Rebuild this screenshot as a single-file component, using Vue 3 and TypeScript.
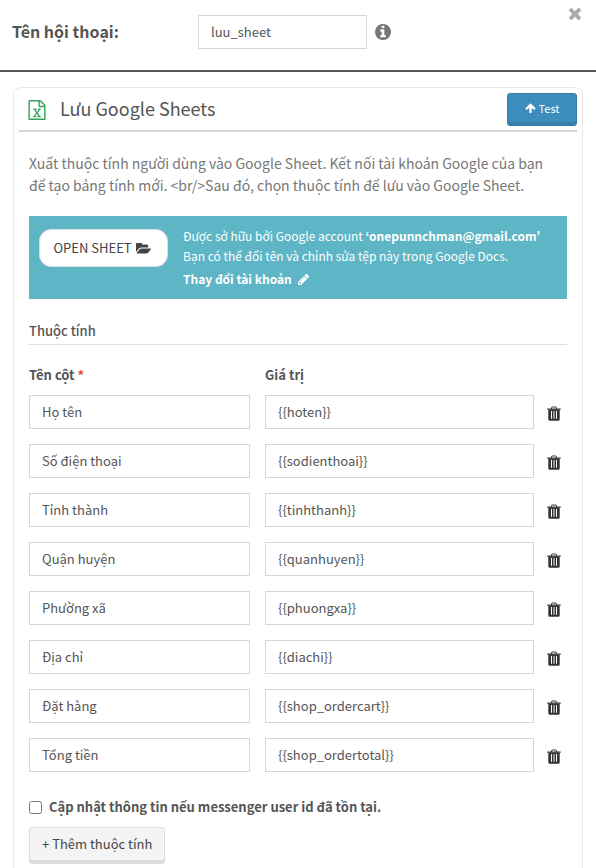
<script setup lang="ts">
import { ref } from 'vue'

interface AttributeRow {
  column: string
  value: string
}

const dialogName = ref('luu_sheet')
const updateExisting = ref(false)
const rows = ref<AttributeRow[]>([
  { column: 'Họ tên', value: '{{hoten}}' },
  { column: 'Số điện thoại', value: '{{sodienthoai}}' },
  { column: 'Tỉnh thành', value: '{{tinhthanh}}' },
  { column: 'Quận huyện', value: '{{quanhuyen}}' },
  { column: 'Phường xã', value: '{{phuongxa}}' },
  { column: 'Địa chỉ', value: '{{diachi}}' },
  { column: 'Đặt hàng', value: '{{shop_ordercart}}' },
  { column: 'Tổng tiền', value: '{{shop_ordertotal}}' },
])

const description =
  'Xuất thuộc tính người dùng vào Google Sheet. Kết nối tài khoản Google của bạn để tạo bảng tính mới. <br/>Sau đó, chọn thuộc tính để lưu vào Google Sheet.'

function addRow(): void {
  rows.value.push({ column: '', value: '' })
}

function removeRow(index: number): void {
  rows.value.splice(index, 1)
}
</script>

<template>
  <main class="page">
    <header class="top">
      <label class="top-label" for="dialog-name">Tên hội thoại:</label>
      <input id="dialog-name" v-model="dialogName" class="field top-field" type="text" />
      <svg class="info" viewBox="128 128 1536 1536" aria-hidden="true">
        <path d="M1152 1376v-160q0-14-9-23t-23-9h-96v-512q0-14-9-23t-23-9h-320q-14 0-23 9t-9 23v160q0 14 9 23t23 9h96v320h-96q-14 0-23 9t-9 23v160q0 14 9 23t23 9h448q14 0 23-9t9-23zm-128-896v-160q0-14-9-23t-23-9h-192q-14 0-23 9t-9 23v160q0 14 9 23t23 9h192q14 0 23-9t9-23zm640 416q0 209-103 385.5t-279.5 279.5-385.5 103-385.5-103-279.5-279.5-103-385.5 103-385.5 279.5-279.5 385.5-103 385.5 103 279.5 279.5 103 385.5z" />
      </svg>
      <button class="close" type="button" aria-label="Đóng">
        <svg viewBox="302 366 1188 1188" aria-hidden="true">
          <path d="M1490 1322q0 40-28 68l-136 136q-28 28-68 28t-68-28l-294-294-294 294q-28 28-68 28t-68-28l-136-136q-28-28-28-68t28-68l294-294-294-294q-28-28-28-68t28-68l136-136q28-28 68-28t68 28l294 294 294-294q28-28 68-28t68 28l136 136q28 28 28 68t-28 68l-294 294 294 294q28 28 28 68z" />
        </svg>
      </button>
    </header>

    <section class="card">
      <div class="card-head">
        <svg class="excel" viewBox="128 0 1536 1792" aria-hidden="true">
          <path d="M1596 380q28 28 48 76t20 88v1152q0 40-28 68t-68 28h-1344q-40 0-68-28t-28-68v-1600q0-40 28-68t68-28h896q40 0 88 20t76 48zm-444-244v376h376q-10-29-22-41l-313-313q-12-12-41-22zm384 1528v-1024h-416q-40 0-68-28t-28-68v-416h-768v1536h1280zm-979-234v106h281v-106h-75l103-161q5-7 10-16.5t7.5-13.5 3.5-4h2q1 4 5 10 2 4 4.5 7.5t6 8 6.5 8.5l107 161h-76v106h291v-106h-68l-192-273 195-282h67v-107h-279v107h74l-103 159q-4 7-10 16.5t-9 13.5l-2 3h-2q-1-4-5-10-6-11-17-23l-106-159h76v-107h-290v107h68l189 272-194 283h-68z" />
        </svg>
        <h1 class="title">Lưu Google Sheets</h1>
        <button class="test" type="button">
          <svg viewBox="110 128 1570 1536" aria-hidden="true">
            <path d="M1675 971q0 51-37 90l-75 75q-38 38-91 38-54 0-90-38l-294-293v704q0 52-37.5 84.5t-90.5 32.5h-128q-53 0-90.5-32.5t-37.5-84.5v-704l-294 293q-36 38-90 38t-90-38l-75-75q-38-38-38-90 0-53 38-91l651-651q35-37 90-37 54 0 91 37l651 651q37 39 37 91z" />
          </svg>
          Test
        </button>
      </div>

      <div class="card-body">
        <p class="description">{{ description }}</p>

        <div class="banner">
          <button class="open" type="button">
            OPEN SHEET
            <svg viewBox="0 256 1879 1280" aria-hidden="true">
              <path d="M1879 952q0 31-31 66l-336 396q-43 51-120.5 86.5t-143.5 35.5h-1088q-34 0-60.5-13t-26.5-43q0-31 31-66l336-396q43-51 120.5-86.5t143.5-35.5h1088q34 0 60.5 13t26.5 43zm-343-344v160h-832q-94 0-197 47.5t-164 119.5l-337 396-5 6q0-4-.5-12.5t-.5-12.5v-960q0-92 66-158t158-66h320q92 0 158 66t66 158v32h544q92 0 158 66t66 158z" />
            </svg>
          </button>
          <div class="banner-text">
            <p>Được sở hữu bởi Google account <b>‘onepunnchman@gmail.com’</b></p>
            <p>Bạn có thể đổi tên và chỉnh sửa tệp này trong Google Docs.</p>
            <a class="change" href="#">
              Thay đổi tài khoản
              <svg viewBox="128 149 1515 1515" aria-hidden="true">
                <path d="M491 1536l91-91-235-235-91 91v107h128v128h107zm523-928q0-22-22-22-10 0-17 7l-542 542q-7 7-7 17 0 22 22 22 10 0 17-7l542-542q7-7 7-17zm-54-192l416 416-832 832h-416v-416zm683 96q0 53-37 90l-166 166-416-416 166-165q36-38 90-38 53 0 91 38l235 234q37 39 37 91z" />
              </svg>
            </a>
          </div>
        </div>

        <h2 class="section-title">Thuộc tính</h2>

        <div class="grid labels">
          <span id="col-name">Tên cột <span class="required">*</span></span>
          <span id="col-value">Giá trị</span>
        </div>
        <div class="rows">
          <div v-for="(row, index) in rows" :key="index" class="grid">
            <input v-model="row.column" class="field" type="text" aria-labelledby="col-name" />
            <input v-model="row.value" class="field" type="text" aria-labelledby="col-value" />
            <button class="trash" type="button" aria-label="Xóa" @click="removeRow(index)">
              <svg viewBox="0 0 14 15" aria-hidden="true">
                <path class="handle" d="M4.5 3V1.8Q4.5 1 5.3 1H8.7Q9.5 1 9.5 1.8V3" />
                <path d="M0.3 2.5H13.7V3.8H0.3z" />
                <path fill-rule="evenodd" d="M1.3 3.8H12.7V13.2Q12.7 14.8 11.2 14.8H2.8Q1.3 14.8 1.3 13.2zM4 5V12.8H5V5zM9 5V12.8H10V5z" />
                <path class="slit" d="M6 5H8V12.8H6z" />
              </svg>
            </button>
          </div>
        </div>

        <label class="check">
          <input v-model="updateExisting" type="checkbox" />
          Cập nhật thông tin nếu messenger user id đã tồn tại.
        </label>
        <button class="add" type="button" @click="addRow">+ Thêm thuộc tính</button>
      </div>
    </section>
  </main>
</template>

<style>
html {
  scrollbar-width: none;
}

body {
  background: #fff;
}
</style>

<style scoped>
.page,
.page * {
  box-sizing: border-box;
}

.page {
  color: #555;
  font-family: 'Source Sans Pro', 'Noto Sans CJK JP', 'Noto Sans', sans-serif;
  font-size: 13px;
  line-height: 20px;
}

button,
input {
  font: inherit;
  color: inherit;
}

button {
  padding: 0;
  border: 0;
  background: none;
  cursor: pointer;
}

svg {
  display: block;
  flex: none;
  fill: currentColor;
}

p,
h1,
h2 {
  margin: 0;
}

.top {
  position: relative;
  display: flex;
  align-items: flex-start;
  padding: 15px 12px 21px;
  border-bottom: 2px solid #555;
}

.top-label {
  flex: 0 0 186px;
  font-size: 16px;
  font-weight: 700;
  line-height: 32px;
}

.field {
  width: 100%;
  min-width: 0;
  height: 34px;
  padding: 5px 12px 7px;
  border: 1px solid #d2d6de;
  border-radius: 0;
  background: #fff;
}

.top-field {
  width: 169px;
}

.info {
  width: 16px;
  height: 16px;
  margin: 9px 0 0 8px;
  color: #777;
}

.close {
  position: absolute;
  top: 8px;
  right: 15px;
  color: #aaa;
}

.close svg {
  width: 12px;
  height: 12px;
}

.card {
  margin: 15px 13px 0;
  padding: 5px;
  border: 1px solid #e8e8e8;
  border-radius: 8px;
}

.card-head {
  display: flex;
  align-items: center;
  padding: 0 0 4px 9px;
  border-bottom: 2px solid #d2d6de;
}

.excel {
  width: 18px;
  height: 20px;
  color: #34a45b;
}

.title {
  flex: 1;
  margin-left: 14px;
  padding-bottom: 3px;
  font-size: 18px;
  font-weight: 400;
  line-height: 30px;
}

.test {
  display: flex;
  align-items: center;
  justify-content: center;
  gap: 3px;
  width: 70px;
  height: 33px;
  padding-bottom: 4px;
  border: 1px solid #367fa9;
  border-radius: 3px;
  background: #3c8dbc;
  box-shadow: inset 0 -3px 0 #367fa9;
  color: #fff;
  font-size: 11px;
}

.test svg {
  width: 11px;
  height: 10px;
}

.card-body {
  padding: 20px 10px;
}

.description {
  padding-right: 10px;
  color: #777;
  font-size: 14px;
  line-height: 22px;
}

.banner {
  display: flex;
  align-items: flex-start;
  gap: 15px;
  margin-top: 20px;
  padding: 10px;
  background: #5eb5c5;
  color: #fff;
  font-size: 12px;
}

.open {
  display: flex;
  flex: none;
  align-items: center;
  justify-content: center;
  gap: 4px;
  width: 129px;
  height: 38px;
  margin-top: 3px;
  padding-right: 3px;
  border: 1px solid #ddd;
  border-radius: 12px;
  background: #fff;
  color: #444;
  font-size: 13px;
}

.open svg {
  width: 15px;
  height: 11px;
}

.banner-text {
  min-width: 0;
}

.change {
  display: flex;
  align-items: center;
  gap: 6px;
  margin-top: 3px;
  color: #fff;
  font-weight: 700;
  text-decoration: none;
}

.change svg {
  width: 11px;
  height: 11px;
}

.section-title {
  margin-top: 22px;
  padding-bottom: 3px;
  border-bottom: 1px solid #ddd;
  font-size: 13px;
  font-weight: 500;
}

.grid {
  display: grid;
  grid-template-columns: 221fr 269fr 18px;
  column-gap: 15px;
}

.labels {
  margin-top: 20px;
  font-weight: 700;
}

.required {
  color: #dd4b39;
}

.rows {
  display: grid;
  gap: 15px;
  margin-top: 10px;
}

.trash {
  place-self: center start;
  margin-left: -2px;
  padding-top: 3px;
  color: #333;
}

.trash svg {
  width: 14px;
  height: 15px;
}

.handle {
  fill: none;
  stroke: currentColor;
}

.slit {
  fill: #999;
}

.check {
  display: flex;
  align-items: center;
  gap: 7px;
  margin-top: 25px;
  font-weight: 700;
}

.check input {
  width: 13px;
  height: 13px;
  margin: 0;
}

.add {
  height: 37px;
  margin-top: 10px;
  padding: 0 12px 3px;
  border: 1px solid #ddd;
  border-radius: 3px;
  background: #f4f4f4;
  box-shadow: inset 0 -3px 0 #ddd;
  color: #444;
}
</style>
